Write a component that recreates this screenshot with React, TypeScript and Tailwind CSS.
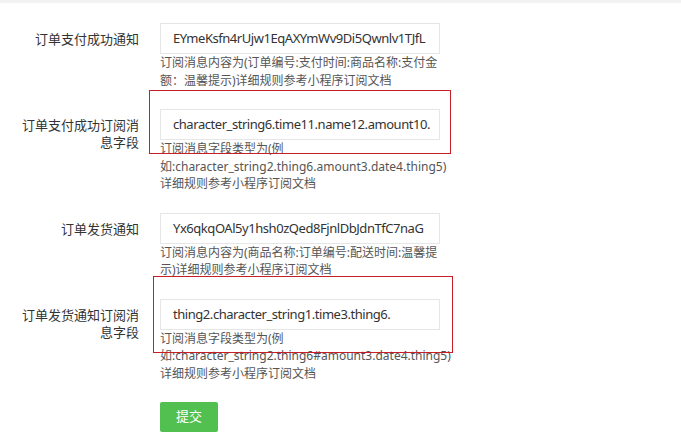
import React from "react";

const font = { fontFamily: '"Noto Sans", "Noto Sans CJK SC", sans-serif' };

function Row({
  label,
  value,
  help,
}: {
  label: string;
  value: string;
  help: string;
}) {
  return (
    <div className="flex mb-[20px]">
      <div className="ml-[19px] w-[120px] shrink-0 text-right text-[13px] leading-[17px] text-[#333] pt-[8px]">
        {label}
      </div>
      <div className="ml-[21px] w-[280px] shrink-0">
        <div className="h-[31px] w-[280px] border border-[#e6e6e6] bg-white pl-[12px] text-[13px] tracking-[-0.45px] leading-[29px] text-[#333] overflow-hidden whitespace-nowrap">
          {value}
        </div>
        <div className="text-[12px] leading-[17.5px] text-[#555]">{help}</div>
      </div>
    </div>
  );
}

export default function App() {
  return (
    <div className="relative w-[681px] h-[443px] bg-white overflow-hidden" style={font}>
      <div className="h-[3px] bg-[#f2f2f2]" />
      <div className="pt-[20px]">
        <Row
          label="订单支付成功通知"
          value="EYmeKsfn4rUjw1EqAXYmWv9Di5Qwnlv1TJfL"
          help="订阅消息内容为(订单编号:支付时间:商品名称:支付金额：温馨提示)详细规则参考小程序订阅文档"
        />
        <Row
          label="订单支付成功订阅消息字段"
          value="character_string6.time11.name12.amount10."
          help="订阅消息字段类型为(例如:character_string2.thing6.amount3.date4.thing5)详细规则参考小程序订阅文档"
        />
        <Row
          label="订单发货通知"
          value="Yx6qkqOAl5y1hsh0zQed8FjnlDbJdnTfC7naG"
          help="订阅消息内容为(商品名称:订单编号:配送时间:温馨提示)详细规则参考小程序订阅文档"
        />
        <Row
          label="订单发货通知订阅消息字段"
          value="thing2.character_string1.time3.thing6."
          help="订阅消息字段类型为(例如:character_string2.thing6#amount3.date4.thing5)详细规则参考小程序订阅文档"
        />
        <div className="ml-[160px]">
          <button className="h-[30px] w-[58px] rounded-[2px] bg-[#52c051] text-[13px] text-white">
            提交
          </button>
        </div>
      </div>
      <div className="absolute left-[149px] top-[90px] w-[302px] h-[64px] border border-[#c81e28] pointer-events-none" />
      <div className="absolute left-[153px] top-[276px] w-[300px] h-[77px] border border-[#c81e28] pointer-events-none" />
    </div>
  );
}
